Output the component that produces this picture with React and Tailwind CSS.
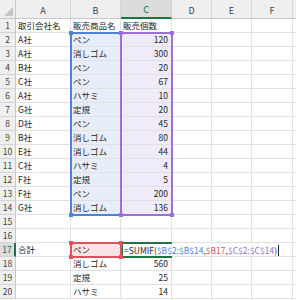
import React from 'react';

// ─── sheet data ───────────────────────────────────────────────────────────
const ROWS = [
  ['取引会社名', '販売商品名', '販売個数'],
  ['A社', 'ペン', 120],
  ['A社', '消しゴム', 300],
  ['B社', 'ペン', 20],
  ['C社', 'ペン', 67],
  ['A社', 'ハサミ', 10],
  ['G社', '定規', 20],
  ['D社', 'ペン', 45],
  ['B社', '消しゴム', 80],
  ['E社', '消しゴム', 44],
  ['C社', 'ハサミ', 4],
  ['F社', '定規', 5],
  ['F社', 'ペン', 200],
  ['G社', '消しゴム', 136],
  ['', '', ''],
  ['', '', ''],
  ['合計', 'ペン', ''],
  ['', '消しゴム', 560],
  ['', '定規', 25],
  ['', 'ハサミ', 14],
];

const COLS = ['A', 'B', 'C', 'D', 'E', 'F', ''];

// same track sizes for the cells and the overlay layer
const GRID = 'grid grid-cols-[16px_55px_50px_51px_40px_40px_41px_20px] grid-rows-[19px_repeat(20,14px)]';

function Cell({ children, className = '' }) {
  return (
    <div className={`flex items-center border-r border-b border-[#e1e1e1] whitespace-nowrap ${className}`}>
      {children}
    </div>
  );
}

// reference-range frame with its little corner squares
function Range({ place, border, fill, corners }) {
  return (
    <div className={`relative -m-px border-2 ${border} ${place}`}>
      {corners.includes('tl') && <span className={`absolute -left-[3px] -top-[3px] w-1 h-1 ${fill}`} />}
      {corners.includes('tr') && <span className={`absolute -right-[3px] -top-[3px] w-1 h-1 ${fill}`} />}
      {corners.includes('bl') && <span className={`absolute -left-[3px] -bottom-[3px] w-1 h-1 ${fill}`} />}
      {corners.includes('br') && <span className={`absolute -right-[3px] -bottom-[3px] w-1 h-1 ${fill}`} />}
    </div>
  );
}

export default function App() {
  return (
    <div className="relative w-[296px] h-[300px] overflow-hidden bg-white text-[8.5px] leading-none text-[#262626] font-['Noto_Sans_CJK_JP',sans-serif]">
      <div className={GRID}>
        {/* column header row */}
        <div className="flex items-end justify-end p-[2px] bg-[#efefef] border-r border-b border-[#c8c8c8]">
          <svg width="9" height="9" viewBox="0 0 9 9">
            <polygon points="9,0 9,9 0,9" fill="#c4c4c4" />
          </svg>
        </div>
        {COLS.map((c, i) => (
          <div key={i}
            className={`flex items-center justify-center pt-[2px] border-r border-[#d4d4d4] text-[9px] ${
              c === 'C'
                ? 'bg-[#dcdcdc] text-[#217346] border-b-2 border-b-[#217346]'
                : 'bg-[#efefef] text-[#444] border-b border-b-[#c8c8c8]'
            }`}>
            {c}
          </div>
        ))}

        {ROWS.map((row, i) => {
          const r = i + 1;
          const inRange = r >= 2 && r <= 14;
          return (
            <React.Fragment key={r}>
              <div className={`flex items-center justify-center border-b border-[#d4d4d4] ${
                r === 17
                  ? 'bg-[#dcdcdc] text-[#217346] border-r-2 border-r-[#217346]'
                  : 'bg-[#efefef] text-[#444] border-r border-r-[#c8c8c8]'
              }`}>
                {r}
              </div>
              <Cell className="pl-[2px]">{row[0]}</Cell>
              <Cell className={`pl-[2px] ${inRange ? 'bg-[#e8eef9]' : r === 17 ? 'bg-[#fbe4e5]' : ''}`}>{row[1]}</Cell>
              <Cell className={`pr-[3px] ${typeof row[2] === 'number' ? 'justify-end' : 'pl-[2px]'} ${inRange ? 'bg-[#efebf8]' : ''}`}>
                {row[2]}
              </Cell>
              <Cell />
              <Cell />
              <Cell />
              <Cell />
            </React.Fragment>
          );
        })}
      </div>

      {/* overlay layer: ranges and the cell being edited, placed on the same grid lines */}
      <div className={`absolute inset-0 pointer-events-none ${GRID}`}>
        <Range place="col-start-3 row-start-3 row-span-13" border="border-[#4f83d6]" fill="bg-[#4f83d6]" corners={['tl', 'bl']} />
        <Range place="col-start-4 row-start-3 row-span-13" border="border-[#9a6fd6]" fill="bg-[#9a6fd6]" corners={['tl', 'tr', 'bl', 'br']} />
        <Range place="col-start-3 row-start-18" border="border-[#d9545f]" fill="bg-[#d9545f]" corners={['tl', 'tr', 'bl', 'br']} />

        {/* in-cell editor text spills over D:F */}
        <div className="col-start-4 col-span-4 row-start-18 my-px ml-[2px] mr-[8px] bg-white flex items-center pl-[1px] whitespace-nowrap">
          <span>=SUMIF(</span>
          <span className="text-[#4f83d6]">$B$2:$B$14</span>
          <span>,</span>
          <span className="text-[#d9545f]">$B17</span>
          <span>,</span>
          <span className="text-[#9a6fd6]">$C$2:$C$14</span>
          <span>)</span>
          <span className="ml-[1px] w-px h-[11px] bg-[#222]" />
        </div>
        <div className="col-start-4 row-start-18 -my-px border-2 border-r-0 border-[#217346]" />
      </div>
    </div>
  );
}
